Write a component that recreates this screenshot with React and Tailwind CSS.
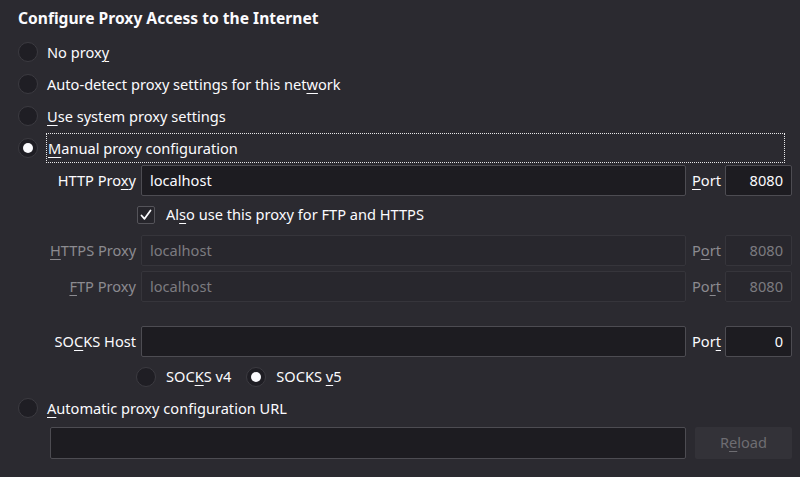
import React from 'react';

const font = { fontFamily: '"Noto Sans", "Open Sans", sans-serif' };

function Radio({ checked }) {
  return (
    <span className="w-[20px] h-[20px] rounded-full bg-[#1f1e24] border border-[#3c3b41] flex items-center justify-center shrink-0">
      {checked && <span className="w-[10px] h-[10px] rounded-full bg-[#fbfbfe]" />}
    </span>
  );
}

function RadioRow({ checked, focused, children }) {
  return (
    <div className="h-[32px] flex items-center pl-[18px]">
      <Radio checked={checked} />
      <span
        className={
          'ml-[8px] h-[30px] flex items-center pl-[1px] pt-[1px] ' +
          (focused ? 'flex-1 mr-[15px] border border-dotted border-[#e8e8ea]' : '')
        }
      >
        {children}
      </span>
    </div>
  );
}

function Field({ value, disabled, right }) {
  return (
    <div
      className={
        'h-full w-full rounded-[2px] border flex items-center px-[8px] ' +
        (right ? 'justify-end ' : '') +
        (disabled
          ? 'bg-[#28272d] border-[#36353b] text-[#7c7b80]'
          : 'bg-[#1d1c21] border-[#4d4c52] text-[#fbfbfe]')
      }
    >
      {value}
    </div>
  );
}

function ProxyRow({ label, value, port, disabled, portLabel }) {
  const txt = disabled ? 'text-[#8c8b90]' : 'text-[#fbfbfe]';
  return (
    <div className="h-[31px] flex items-center pl-[50px]">
      <span className={'w-[86px] text-right whitespace-nowrap ' + txt}>{label}</span>
      <div className="w-[545px] h-full ml-[5px]">
        <Field value={value} disabled={disabled} />
      </div>
      <span className={'w-[28px] ml-[6px] whitespace-nowrap ' + txt}>{portLabel}</span>
      <div className="w-[67px] h-full ml-[5px]">
        <Field value={port} disabled={disabled} right />
      </div>
    </div>
  );
}

const U = ({ children }) => <u className="underline underline-offset-[3px] decoration-1">{children}</u>;

export default function App() {
  return (
    <div style={font} className="w-[800px] h-[477px] bg-[#2b2a30] text-[#fbfbfe] text-[14.6px] overflow-hidden">
      <div className="h-[36px] flex items-center pl-[18px] pt-[2px]">
        <h1 className="text-[15.6px] font-bold">Configure Proxy Access to the Internet</h1>
      </div>

      <RadioRow>No prox<U>y</U></RadioRow>
      <RadioRow>Auto-detect proxy settings for this net<U>w</U>ork</RadioRow>
      <RadioRow><U>U</U>se system proxy settings</RadioRow>
      <RadioRow checked focused><U>M</U>anual proxy configuration</RadioRow>

      <div className="mt-[1px]">
        <ProxyRow label={<>HTTP Pro<U>x</U>y</>} value="localhost" port="8080" portLabel={<><U>P</U>ort</>} />
      </div>

      <div className="h-[30px] mt-[4px] flex items-center pl-[137px]">
        <span className="w-[18px] h-[18px] rounded-[2px] border border-[#55545a] bg-[#26252b] flex items-center justify-center">
          <svg width="14" height="14" viewBox="0 0 14 14" fill="none">
            <path d="M2.5 7.5 L5.5 10.8 L11.5 2.5" stroke="#fbfbfe" strokeWidth="1.8" strokeLinecap="round" strokeLinejoin="round" />
          </svg>
        </span>
        <span className="ml-[11px]">Al<U>s</U>o use this proxy for FTP and HTTPS</span>
      </div>

      <div className="mt-[5px]">
        <ProxyRow disabled label={<><U>H</U>TTPS Proxy</>} value="localhost" port="8080" portLabel={<>P<U>o</U>rt</>} />
      </div>
      <div className="mt-[5px]">
        <ProxyRow disabled label={<><U>F</U>TP Proxy</>} value="localhost" port="8080" portLabel={<>Po<U>r</U>t</>} />
      </div>

      <div className="mt-[24px]">
        <ProxyRow label={<>SO<U>C</U>KS Host</>} value="" port="0" portLabel={<>Por<U>t</U></>} />
      </div>

      <div className="h-[30px] mt-[5px] flex items-center pl-[136px]">
        <Radio />
        <span className="ml-[10px]">SOC<U>K</U>S v4</span>
        <span className="ml-[15px]"><Radio checked /></span>
        <span className="ml-[10px]">SOCKS <U>v</U>5</span>
      </div>

      <RadioRow><U>A</U>utomatic proxy configuration URL</RadioRow>

      <div className="h-[32px] mt-[3px] flex items-stretch pl-[50px]">
        <div className="w-[636px]">
          <Field value="" />
        </div>
        <div className="w-[97px] ml-[9px] bg-[#333238] rounded-[2px] flex items-center justify-center text-[#6e6d72]">
          R<U>e</U>load
        </div>
      </div>
    </div>
  );
}
